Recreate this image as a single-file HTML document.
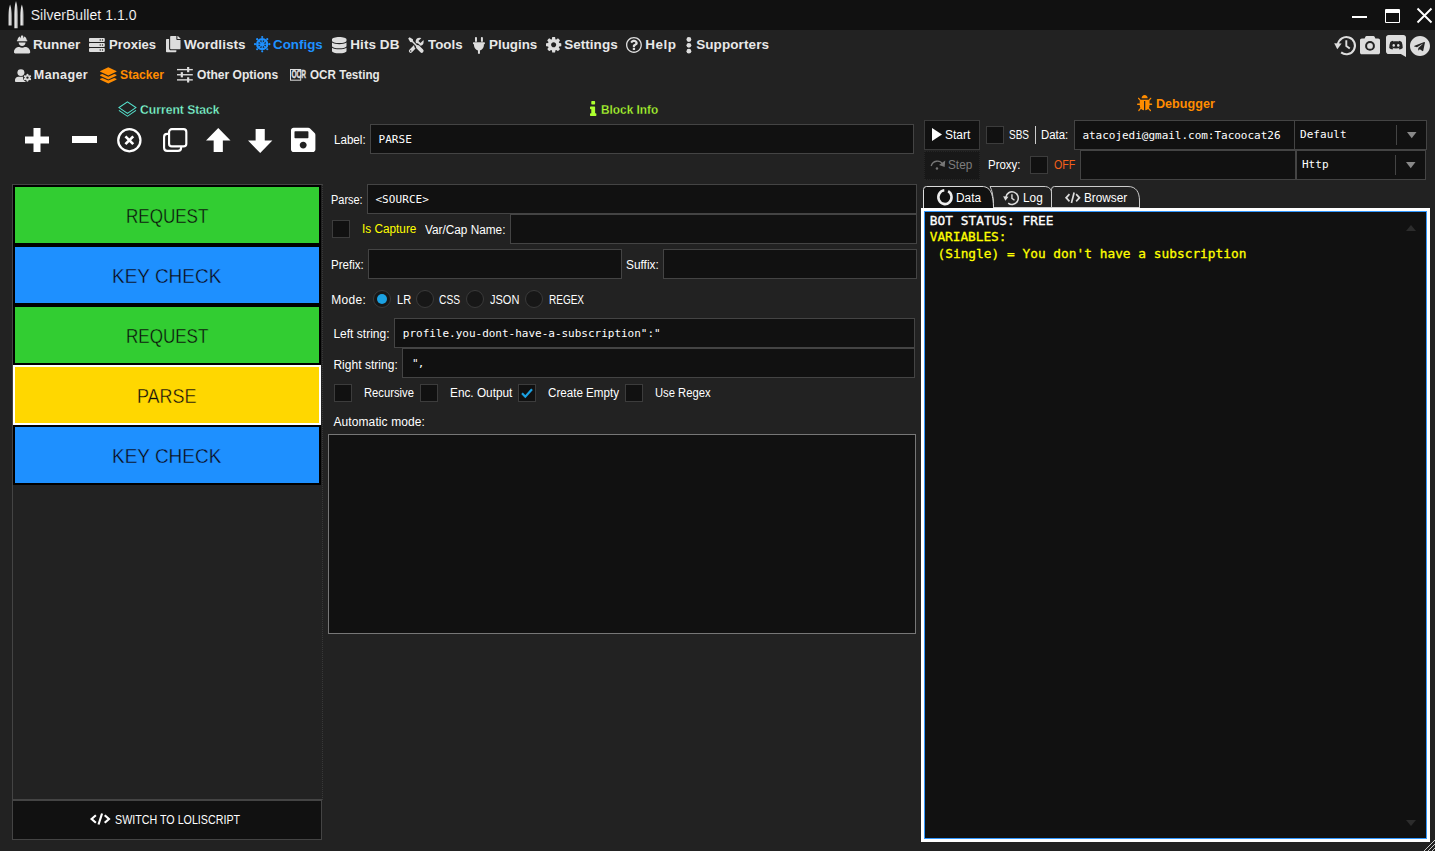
<!DOCTYPE html>
<html lang="en">
<head>
<meta charset="utf-8">
<title>SilverBullet 1.1.0</title>
<style>
html,body{margin:0;padding:0}
body{width:1435px;height:851px;overflow:hidden;background:#222;position:relative;color:#fff;font-family:"Liberation Sans",Arial,sans-serif}
.t{position:absolute;white-space:pre;line-height:20px;height:20px;display:block;transform-origin:0 50%}
.s{font-family:"Liberation Sans",Arial,sans-serif}
.m{font-family:"DejaVu Sans Mono","Liberation Mono",monospace}
.ic{position:absolute;display:block;overflow:visible}
div{position:absolute;box-sizing:border-box}
.titlebar{left:0;top:0;width:1435px;height:30px;background:#111}
.inp{background:#111;border:1px solid #444}
.chk{background:#111;border:1px solid #3c3c3c}
.btn{background:#111;border:1px solid #3a3a3a}
.blk{border:2px solid #000}
.rad{background:#171717;border:1px solid #3a3a3a;border-radius:50%}
.k32c{-webkit-text-stroke:.38px #32cd32}
.k1e9{-webkit-text-stroke:.38px #1e90ff}
.kffd{-webkit-text-stroke:.38px #ffd700}
.o{-webkit-text-stroke:.3px}
.tt{-webkit-text-stroke:.15px #111}
.th{-webkit-text-stroke:.3px #222}

</style>
</head>
<body>
<div class="titlebar">
<svg class="ic" style="left:7.5px;top:0.5px" width="16.0" height="27.5" viewBox="0 0 16 27.5" preserveAspectRatio="none"><defs><linearGradient id="bg" x1="0" x2="1" y1="0" y2="0"><stop offset="0" stop-color="#8a8a8a"/><stop offset=".45" stop-color="#f6f6f6"/><stop offset="1" stop-color="#7c7c7c"/></linearGradient></defs><path fill="url(#bg)" d="M2.100 3.500 C3.200 6.500 3.900 10.500 3.900 15 V24.500 H0.300 V15 C0.300 10.500 1 6.500 2.100 3.500 Z"/><path fill="url(#bg)" d="M8 0 C9.200 3.500 9.900 8.500 9.900 14 V27.200 H6.100 V14 C6.100 8.500 6.800 3.500 8 0 Z"/><path fill="url(#bg)" d="M13.900 3.500 C15 6.500 15.700 10.500 15.700 15 V24.500 H12.100 V15 C12.100 10.500 12.800 6.500 13.900 3.500 Z"/></svg>
<span class="t s tt" style="left:30.71px;top:5px;font-size:14px;letter-spacing:0.04px;">SilverBullet 1.1.0</span>
<div style="left:1352px;top:15.500px;width:15px;height:2px;background:#fff"></div>
<div style="left:1385px;top:9px;width:15px;height:14px;border:1.5px solid #fff;border-top-width:4.5px;border-radius:1px"></div>
<svg class="ic" style="left:1417.0px;top:8.0px" width="15.0" height="15.0" viewBox="0 0 15 15" preserveAspectRatio="none"><path d="M0.500 0.500 L14.500 14.500 M14.500 0.500 L0.500 14.500" stroke="#fff" stroke-width="1.900" fill="none"/></svg>
</div>
<nav class="mainmenu">
<svg class="ic" style="left:13.9px;top:34.9px" width="16.2" height="18.4" viewBox="0 0 448 512" preserveAspectRatio="none"><g fill="#ddd"><path d="M88 176h272c4.4 0 8-3.6 8-8v-16c0-4.4-3.600-8-8-8h-8c0-46.400-28.500-85.500-68.600-102.300L256 96V32c0-8.800-7.200-16-16-16h-32c-8.800 0-16 7.200-16 16v64l-27.400-54.300C124.500 58.500 96 97.600 96 144h-8c-4.400 0-8 3.600-8 8v16c0 4.400 3.600 8 8 8z"/><path d="M128 208c0 53 43 96 96 96s96-43 96-96z"/><path d="M313.600 336h-16.700c-22.200 10.200-46.900 16-72.900 16s-50.600-5.800-72.900-16h-16.700C60.200 336 0 396.200 0 470.400V480c0 17.700 14.300 32 32 32h384c17.700 0 32-14.300 32-32v-9.600c0-74.200-60.200-134.400-134.400-134.400z"/></g></svg>
<span class="t s" style="left:32.93px;top:35px;font-size:13.5px;font-weight:700;color:#e8e8e8;">Runner</span>
<svg class="ic" style="left:89.0px;top:37.9px" width="15.8" height="13.9" viewBox="0 0 18 15.100" preserveAspectRatio="none"><rect x="0" y="0.0" width="18" height="4.300" rx="1" fill="#ddd"/><circle cx="12.800" cy="2.15" r="0.800" fill="#222"/><circle cx="15.400" cy="2.15" r="0.800" fill="#222"/><rect x="0" y="5.4" width="18" height="4.300" rx="1" fill="#ddd"/><circle cx="12.800" cy="7.55" r="0.800" fill="#222"/><circle cx="15.400" cy="7.55" r="0.800" fill="#222"/><rect x="0" y="10.8" width="18" height="4.300" rx="1" fill="#ddd"/><circle cx="12.800" cy="12.95" r="0.800" fill="#222"/><circle cx="15.400" cy="12.95" r="0.800" fill="#222"/></svg>
<span class="t s" style="left:109.33px;top:35px;font-size:13.5px;font-weight:700;color:#e8e8e8;transform:scaleX(0.966);">Proxies</span>
<svg class="ic" style="left:165.9px;top:36.3px" width="14.5" height="16.3" viewBox="0 0 448 512" preserveAspectRatio="none"><path fill="#ddd" d="M320 448v40c0 13.255-10.745 24-24 24H24c-13.255 0-24-10.745-24-24V120c0-13.255 10.745-24 24-24h72v296c0 30.879 25.121 56 56 56h168zm0-344V0H152c-13.255 0-24 10.745-24 24v368c0 13.255 10.745 24 24 24h272c13.255 0 24-10.745 24-24V128H344c-13.2 0-24-10.8-24-24zm120.971-31.029L375.029 7.029A24 24 0 0 0 358.059 0H352v96h96v-6.059a24 24 0 0 0-7.029-16.97z"/></svg>
<span class="t s" style="left:183.93px;top:35px;font-size:13.5px;font-weight:700;color:#e8e8e8;letter-spacing:0.05px;">Wordlists</span>
<svg class="ic" style="left:253.7px;top:36.4px" width="16.4" height="16.4" viewBox="0 0 24 24" preserveAspectRatio="none"><circle cx="12" cy="12" r="7.300" fill="none" stroke="#1e90ff" stroke-width="3.400"/><circle cx="12" cy="12" r="2.900" fill="#1e90ff"/><line x1="14.00" y1="12.00" x2="19.00" y2="12.00" stroke="#1e90ff" stroke-width="1.900"/><circle cx="22.50" cy="12.00" r="1.600" fill="#1e90ff"/><line x1="13.41" y1="13.41" x2="16.95" y2="16.95" stroke="#1e90ff" stroke-width="1.900"/><circle cx="19.42" cy="19.42" r="1.600" fill="#1e90ff"/><line x1="12.00" y1="14.00" x2="12.00" y2="19.00" stroke="#1e90ff" stroke-width="1.900"/><circle cx="12.00" cy="22.50" r="1.600" fill="#1e90ff"/><line x1="10.59" y1="13.41" x2="7.05" y2="16.95" stroke="#1e90ff" stroke-width="1.900"/><circle cx="4.58" cy="19.42" r="1.600" fill="#1e90ff"/><line x1="10.00" y1="12.00" x2="5.00" y2="12.00" stroke="#1e90ff" stroke-width="1.900"/><circle cx="1.50" cy="12.00" r="1.600" fill="#1e90ff"/><line x1="10.59" y1="10.59" x2="7.05" y2="7.05" stroke="#1e90ff" stroke-width="1.900"/><circle cx="4.58" cy="4.58" r="1.600" fill="#1e90ff"/><line x1="12.00" y1="10.00" x2="12.00" y2="5.00" stroke="#1e90ff" stroke-width="1.900"/><circle cx="12.00" cy="1.50" r="1.600" fill="#1e90ff"/><line x1="13.41" y1="10.59" x2="16.95" y2="7.05" stroke="#1e90ff" stroke-width="1.900"/><circle cx="19.42" cy="4.58" r="1.600" fill="#1e90ff"/></svg>
<span class="t s" style="left:272.73px;top:35px;font-size:13.5px;font-weight:700;color:#1e90ff;transform:scaleX(0.990);">Configs</span>
<svg class="ic" style="left:332.0px;top:36.9px" width="14.5" height="16.3" viewBox="0 0 448 512" preserveAspectRatio="none"><path fill="#ddd" d="M448 73.143v45.714C448 159.143 347.667 192 224 192S0 159.143 0 118.857V73.143C0 32.857 100.333 0 224 0s224 32.857 224 73.143zM448 176v102.857C448 319.143 347.667 352 224 352S0 319.143 0 278.857V176c48.125 33.143 136.208 48.572 224 48.572S399.874 209.143 448 176zm0 160v102.857C448 479.143 347.667 512 224 512S0 479.143 0 438.857V336c48.125 33.143 136.208 48.572 224 48.572S399.874 369.143 448 336z"/></svg>
<span class="t s" style="left:350.23px;top:35px;font-size:13.5px;font-weight:700;color:#e8e8e8;letter-spacing:0.08px;">Hits DB</span>
<svg class="ic" style="left:408.0px;top:36.6px" width="16.4" height="16.7" viewBox="0 0 24.500 24.500" preserveAspectRatio="none"><line x1="4" y1="20.500" x2="14.500" y2="10" stroke="#ddd" stroke-width="5.400" stroke-linecap="round"/><circle cx="17.400" cy="7.100" r="6" fill="#ddd"/><rect x="17" y="4.900" width="9" height="4.400" transform="rotate(-45 17.400 7.100)" fill="#222"/><circle cx="4" cy="20.500" r="1.100" fill="#222"/><line x1="13.600" y1="13.600" x2="20.600" y2="20.600" stroke="#222" stroke-width="8" stroke-linecap="round"/><line x1="6" y1="6" x2="12.500" y2="12.500" stroke="#222" stroke-width="4.600"/><line x1="14.600" y1="14.600" x2="20.500" y2="20.500" stroke="#ddd" stroke-width="5.600" stroke-linecap="round"/><line x1="4.500" y1="4.500" x2="14" y2="14" stroke="#ddd" stroke-width="2.300"/><path d="M0.300 2.300 L2.300 0.300 L7.300 3.300 L7.600 5.400 L5.400 7.600 L3.300 7.300 Z" fill="#ddd"/></svg>
<span class="t s" style="left:428.13px;top:35px;font-size:13.5px;font-weight:700;color:#e8e8e8;transform:scaleX(0.987);">Tools</span>
<svg class="ic" style="left:472.8px;top:36.6px" width="11.9" height="16.7" viewBox="0 0 384 512" preserveAspectRatio="none"><path fill="#ddd" d="M256 144V32c0-17.673 14.327-32 32-32s32 14.327 32 32v112h-64zm112 16H16c-8.837 0-16 7.163-16 16v32c0 8.837 7.163 16 16 16h16v32c0 77.406 54.969 141.971 128 156.796V512h64v-99.204c73.031-14.825 128-79.390 128-156.796v-32h16c8.837 0 16-7.163 16-16v-32c0-8.837-7.163-16-16-16zm-240-16V32c0-17.673-14.327-32-32-32S64 14.327 64 32v112h64z"/></svg>
<span class="t s" style="left:489.03px;top:35px;font-size:13.5px;font-weight:700;color:#e8e8e8;transform:scaleX(0.991);">Plugins</span>
<svg class="ic" style="left:545.7px;top:37.2px" width="15.3" height="15.5" viewBox="0 0 1536 1536" preserveAspectRatio="none"><path fill="#ddd" d="M1024 768C1024 909 909 1024 768 1024C627 1024 512 909 512 768C512 627 627 512 768 512C909 512 1024 627 1024 768ZM1536 659C1536 642 1524 626 1507 623L1324 595C1314 562 1300 529 1283 497C1317 450 1354 406 1388 360C1393 353 1396 346 1396 337C1396 329 1394 321 1389 315C1347 256 1277 194 1224 145C1217 139 1208 135 1199 135C1190 135 1181 138 1175 144L1033 251C1004 236 974 224 943 214L915 30C913 13 897 0 879 0H657C639 0 625 12 621 28C605 88 599 153 592 214C561 224 530 237 501 252L363 145C355 139 346 135 337 135C303 135 168 281 144 314C139 321 135 328 135 337C135 346 139 354 145 361C182 406 218 451 252 499C236 529 223 559 213 591L27 619C12 622 0 640 0 655V877C0 894 12 910 29 913L212 940C222 974 236 1007 253 1039C219 1086 182 1130 148 1176C143 1183 140 1190 140 1199C140 1207 142 1215 147 1222C189 1280 259 1342 312 1390C319 1397 328 1401 337 1401C346 1401 355 1398 362 1392L503 1285C532 1300 562 1312 593 1322L621 1506C623 1523 639 1536 657 1536H879C897 1536 911 1524 915 1508C931 1448 937 1383 944 1322C975 1312 1006 1299 1035 1284L1173 1392C1181 1397 1190 1401 1199 1401C1233 1401 1368 1254 1392 1222C1398 1215 1401 1208 1401 1199C1401 1190 1397 1181 1391 1174C1354 1129 1318 1085 1284 1036C1300 1007 1312 977 1323 945L1508 917C1524 914 1536 896 1536 881Z"/></svg>
<span class="t s" style="left:564.23px;top:35px;font-size:13.5px;font-weight:700;color:#e8e8e8;letter-spacing:0.03px;">Settings</span>
<svg class="ic" style="left:625.9px;top:36.8px" width="15.9" height="15.9" viewBox="0 0 1536 1536" preserveAspectRatio="none"><path fill="#ddd" d="M880 1072C880 1054 866 1040 848 1040H688C670 1040 656 1054 656 1072V1232C656 1250 670 1264 688 1264H848C866 1264 880 1250 880 1232ZM1136 576C1136 402 952 272 788 272C636 272 521 335 439 464C430 478 433 497 446 507L554 589C559 593 566 595 573 595C583 595 592 591 598 583C635 537 656 515 678 500C701 484 738 473 773 473C839 473 912 516 912 574C912 619 875 638 815 666C744 698 656 737 656 860V928C656 946 670 960 688 960H848C866 960 880 946 880 928V896C880 864 912 845 964 815C1037 774 1136 718 1136 576ZM768 128C1121 128 1408 415 1408 768C1408 1121 1121 1408 768 1408C415 1408 128 1121 128 768C128 415 415 128 768 128ZM1536 768C1536 344 1192 0 768 0C344 0 0 344 0 768C0 1192 344 1536 768 1536C1192 1536 1536 1192 1536 768Z"/></svg>
<span class="t s" style="left:645.33px;top:35px;font-size:13.5px;font-weight:700;color:#e8e8e8;letter-spacing:0.43px;">Help</span>
<svg class="ic" style="left:686.0px;top:36.6px" width="5.8" height="16.7" viewBox="0 0 6 17" preserveAspectRatio="none"><circle cx="3" cy="2.600" r="2.500" fill="#ddd"/><circle cx="3" cy="8.500" r="2.500" fill="#ddd"/><circle cx="3" cy="14.400" r="2.500" fill="#ddd"/></svg>
<span class="t s" style="left:696.13px;top:35px;font-size:13.5px;font-weight:700;color:#e8e8e8;letter-spacing:0.1px;">Supporters</span>
<svg class="ic" style="left:1334.0px;top:35.5px" width="22.0" height="19.3" viewBox="0 0 22 19.300" preserveAspectRatio="none"><path d="M3.93 8.46 A 8.55 8.55 0 1 1 7.14 16.39" fill="none" stroke="#ddd" stroke-width="2.100"/><path d="M0.200 7.200 L7.600 7.600 L3.300 13.300 Z" fill="#ddd"/><path d="M12.300 4.300 V9.900 L15.800 12.500" fill="none" stroke="#ddd" stroke-width="1.900"/></svg>
<svg class="ic" style="left:1360.0px;top:36.0px" width="20.0" height="18.2" viewBox="0 0 20 18.200" preserveAspectRatio="none"><path fill="#ddd" d="M1.800 2.400 H4.600 L5.300 0.900 C5.500 0.300 6 0 6.600 0 H13.400 C14 0 14.500 0.300 14.700 0.900 L15.400 2.400 H18.200 C19.200 2.400 20 3.200 20 4.200 V16.400 C20 17.400 19.200 18.200 18.200 18.200 H1.800 C0.800 18.200 0 17.400 0 16.400 V4.200 C0 3.200 0.800 2.400 1.800 2.400 Z"/><circle cx="10" cy="9.900" r="4.900" fill="#222"/><circle cx="10" cy="9.900" r="2.900" fill="#ddd"/></svg>
<svg class="ic" style="left:1386.0px;top:35.0px" width="20.0" height="22.0" viewBox="0 0 20 22" preserveAspectRatio="none"><path fill="#ddd" d="M2.600 0 H17.400 C18.800 0 20 1.200 20 2.600 V22 L14.800 19 H2.600 C1.200 19 0 17.800 0 16.400 V2.600 C0 1.200 1.200 0 2.600 0 Z"/><g transform="translate(0.500 0.600) scale(0.950 1)"><path fill="#222" d="M6.900 5.200 C5.600 5.500 4.600 6 4 6.500 C3.300 8.300 2.900 10.300 2.900 12.400 C3.800 13.300 5.200 13.800 6.300 13.900 L7.100 12.900 C6.400 12.700 5.800 12.400 5.300 12 C8 13.300 12 13.300 14.700 12 C14.200 12.400 13.600 12.700 12.900 12.900 L13.700 13.900 C14.800 13.800 16.200 13.300 17.100 12.400 C17.100 10.300 16.700 8.300 16 6.500 C15.400 6 14.400 5.500 13.100 5.200 L12.800 5.800 C11 5.500 9 5.500 7.200 5.800 Z"/><ellipse cx="7.600" cy="9.800" rx="1.300" ry="1.400" fill="#ddd"/><ellipse cx="12.400" cy="9.800" rx="1.300" ry="1.400" fill="#ddd"/></g></svg>
<svg class="ic" style="left:1410.2px;top:36.0px" width="20.0" height="20.0" viewBox="0 0 1792 1792" preserveAspectRatio="none"><path fill="#ddd" d="M1189 1307C1178 1356 1149 1368 1108 1345L884 1180L776 1284C764 1296 754 1306 731 1306L747 1078L1162 703C1180 687 1158 678 1134 694L621 1017L400 948C352 933 351 900 410 877L1274 544C1314 529 1349 553 1336 614ZM1792 896C1792 401 1391 0 896 0C401 0 0 401 0 896C0 1391 401 1792 896 1792C1391 1792 1792 1391 1792 896Z"/></svg>
</nav>
<nav class="submenu">
<svg class="ic" style="left:14.7px;top:68.6px" width="16.2" height="13.4" viewBox="0 0 23 19.500" preserveAspectRatio="none"><circle cx="8.400" cy="5.200" r="5" fill="#ddd"/><path fill="#ddd" d="M4.600 11.400 H12.400 C15 11.400 16.800 13.400 16.800 16 V17.400 C16.800 18.300 16.100 19 15.200 19 H1.600 C0.700 19 0 18.300 0 17.400 V16 C0 13.400 2.100 11.400 4.600 11.400 Z"/><circle cx="17.7" cy="12.6" r="6.300" fill="#222"/><circle cx="17.7" cy="12.6" r="3.900" fill="#ddd"/><circle cx="21.42" cy="14.75" r="1.500" fill="#ddd"/><circle cx="17.70" cy="16.90" r="1.500" fill="#ddd"/><circle cx="13.98" cy="14.75" r="1.500" fill="#ddd"/><circle cx="13.98" cy="10.45" r="1.500" fill="#ddd"/><circle cx="17.70" cy="8.30" r="1.500" fill="#ddd"/><circle cx="21.42" cy="10.45" r="1.500" fill="#ddd"/><circle cx="17.7" cy="12.6" r="1.700" fill="#222"/></svg>
<span class="t s" style="left:33.86px;top:65px;font-size:12.5px;font-weight:700;color:#e8e8e8;letter-spacing:0.41px;">Manager</span>
<svg class="ic" style="left:100.0px;top:66.6px" width="16.6" height="16.5" viewBox="0 0 20 20" preserveAspectRatio="none"><g fill="#ff8c00"><path d="M10 0.300 L19.600 4.700 C20.100 4.900 20.100 5.700 19.600 5.900 L10 10.300 L0.400 5.900 C-0.100 5.700 -0.100 4.900 0.400 4.700 Z"/><path d="M19.600 9.500 L17.200 8.400 L10 11.700 L2.800 8.400 L0.400 9.500 C-0.100 9.700 -0.100 10.500 0.400 10.700 L10 15.100 L19.600 10.700 C20.100 10.500 20.100 9.700 19.600 9.500 Z"/><path d="M19.600 14.300 L17.200 13.200 L10 16.500 L2.800 13.200 L0.400 14.300 C-0.100 14.500 -0.100 15.300 0.400 15.500 L10 19.900 L19.600 15.500 C20.100 15.300 20.100 14.500 19.600 14.300 Z"/></g></svg>
<span class="t s" style="left:120.26px;top:65px;font-size:12.5px;font-weight:700;color:#ff8c00;transform:scaleX(0.975);">Stacker</span>
<svg class="ic" style="left:177.2px;top:67.0px" width="15.8" height="15.5" viewBox="0 0 16 16" preserveAspectRatio="none"><g fill="#ddd"><rect x="0" y="2" width="16" height="1.400"/><rect x="10.200" y="0" width="2.200" height="5.400"/><rect x="0" y="7.300" width="16" height="1.400"/><rect x="3.800" y="5.300" width="2.200" height="5.400"/><rect x="0" y="12.600" width="16" height="1.400"/><rect x="10.200" y="10.600" width="2.200" height="5.400"/></g></svg>
<span class="t s" style="left:197.06px;top:65px;font-size:12.5px;font-weight:700;color:#e8e8e8;transform:scaleX(0.965);">Other Options</span>
<svg class="ic" style="left:290.4px;top:69.0px" width="16.3" height="11.7" viewBox="0 0 16.300 11.700" preserveAspectRatio="none"><rect x="0.500" y="0.500" width="10.200" height="10.700" fill="none" stroke="#ddd" stroke-width="1"/><text x="1.400" y="9.500" font-family="Liberation Sans, Arial, sans-serif" font-weight="700" font-size="10" fill="#ddd" stroke="#ddd" stroke-width="0.450" textLength="14.600" lengthAdjust="spacingAndGlyphs">OCR</text></svg>
<span class="t s" style="left:310.46px;top:65px;font-size:12.5px;font-weight:700;color:#e8e8e8;transform:scaleX(0.932);">OCR Testing</span>
</nav>
<main>
<section class="stack">
<svg class="ic" style="left:118.2px;top:101.2px" width="18.9" height="16.1" viewBox="0 0 20 19.500" preserveAspectRatio="none"><path fill="none" stroke="#56e4cf" stroke-width="1.150" stroke-linejoin="miter" d="M10 1 L19 8 L10 15 L1 8 Z"/><path fill="none" stroke="#56e4cf" stroke-width="1.150" d="M1 11.500 L10 18.500 L19 11.500"/></svg>
<span class="t s th" style="left:140.04px;top:100px;font-size:13px;font-weight:700;color:#7fffd4;transform:scaleX(0.934);">Current Stack</span>
<svg class="ic" style="left:25.0px;top:128.0px" width="24.0" height="24.0" viewBox="0 0 24 24" preserveAspectRatio="none"><path fill="#fff" d="M8.500 0 H15.500 V8.500 H24 V15.500 H15.500 V24 H8.500 V15.500 H0 V8.500 H8.500 Z"/></svg>
<div style="left:72px;top:136.200px;width:25px;height:7px;background:#fff"></div>
<svg class="ic" style="left:117.3px;top:127.7px" width="24.7" height="24.5" viewBox="0 0 24 24" preserveAspectRatio="none"><circle cx="12" cy="12" r="10.800" fill="none" stroke="#fff" stroke-width="2.200"/><path d="M8.200 8.200 L15.800 15.800 M15.800 8.200 L8.200 15.800" stroke="#fff" stroke-width="2.600" fill="none"/></svg>
<svg class="ic" style="left:162.8px;top:128.0px" width="24.5" height="24.0" viewBox="0 0 25 24.500" preserveAspectRatio="none"><rect x="6.200" y="1.200" width="17.600" height="17.600" rx="2.800" fill="none" stroke="#fff" stroke-width="2.200"/><path d="M6.200 6 H4.300 C2.300 6 1.100 7.200 1.100 9.200 V20.200 C1.100 22.200 2.300 23.400 4.300 23.400 H15.300 C17.300 23.400 18.500 22.200 18.500 20.200 V18.800" fill="none" stroke="#fff" stroke-width="2.200"/></svg>
<svg class="ic" style="left:206.0px;top:128.0px" width="24.5" height="24.0" viewBox="0 0 24 23" preserveAspectRatio="none"><path fill="#fff" d="M12 0 L24 12 H16.500 V23 H7.500 V12 H0 Z"/></svg>
<svg class="ic" style="left:248.3px;top:129.0px" width="24.4" height="24.0" viewBox="0 0 24 23" preserveAspectRatio="none"><path fill="#fff" d="M12 23 L24 11 H16.500 V0 H7.500 V11 H0 Z"/></svg>
<svg class="ic" style="left:290.6px;top:126.0px" width="24.4" height="27.8" viewBox="0 0 448 512" preserveAspectRatio="none"><path fill="#fff" d="M433.941 129.941l-83.882-83.882A48 48 0 0 0 316.118 32H48C21.49 32 0 53.49 0 80v352c0 26.51 21.49 48 48 48h352c26.51 0 48-21.49 48-48V163.882a48 48 0 0 0-14.059-33.941zM224 416c-35.346 0-64-28.654-64-64 0-35.346 28.654-64 64-64s64 28.654 64 64c0 35.346-28.654 64-64 64zm96-304.52V212c0 6.627-5.373 12-12 12H76c-6.627 0-12-5.373-12-12V108c0-6.627 5.373-12 12-12h228.52c3.183 0 6.235 1.264 8.485 3.515l3.48 3.48A11.996 11.996 0 0 1 320 111.48z"/></svg>
<div class="list" style="left:12px;top:184px;width:311px;height:616px;border:1px solid #444;border-right:1px dotted #383838"></div>
<div class="blk" style="left:13px;top:185px;width:308px;height:60px;background:#32cd32;"></div>
<span class="t s k32c" style="left:126.3px;top:206.3px;font-size:20px;color:#0c0c0c;transform:scaleX(0.852);">REQUEST</span>
<div class="blk" style="left:13px;top:245px;width:308px;height:60px;background:#1e90ff;"></div>
<span class="t s k1e9" style="left:112.3px;top:266.3px;font-size:20px;color:#0c0c0c;transform:scaleX(0.949);">KEY CHECK</span>
<div class="blk" style="left:13px;top:305px;width:308px;height:60px;background:#32cd32;"></div>
<span class="t s k32c" style="left:126.3px;top:326.3px;font-size:20px;color:#0c0c0c;transform:scaleX(0.852);">REQUEST</span>
<div class="blk" style="left:13px;top:365px;width:308px;height:60px;background:#ffd700;border-color:#fff;"></div>
<span class="t s kffd" style="left:137.3px;top:386.3px;font-size:20px;color:#0c0c0c;transform:scaleX(0.896);">PARSE</span>
<div class="blk" style="left:13px;top:425px;width:308px;height:60px;background:#1e90ff;"></div>
<span class="t s k1e9" style="left:112.3px;top:446.3px;font-size:20px;color:#0c0c0c;transform:scaleX(0.949);">KEY CHECK</span>
<div class="btn" style="left:12px;top:800px;width:310px;height:40px;border-color:#444"></div>
<svg class="ic" style="left:89.6px;top:813.2px" width="20.6" height="12.0" viewBox="0 0 21 13" preserveAspectRatio="none"><path d="M6 2.400 L1.600 6.500 L6 10.600 M15 2.400 L19.400 6.500 L15 10.600" fill="none" stroke="#fff" stroke-width="2.2"/><path d="M12.300 0.600 L8.700 12.400" fill="none" stroke="#fff" stroke-width="2.2"/></svg>
<span class="t s" style="left:114.58px;top:810.3px;font-size:12px;transform:scaleX(0.892);">SWITCH TO LOLISCRIPT</span>
</section>
<section class="blockinfo">
<svg class="ic" style="left:590.1px;top:101.0px" width="6.4" height="15.0" viewBox="0 0 640 1408" preserveAspectRatio="none"><path fill="#adff2f" d="M640 1216C640 1181 611 1152 576 1152H512V576C512 541 483 512 448 512H64C29 512 0 541 0 576V704C0 739 29 768 64 768H128V1152H64C29 1152 0 1181 0 1216V1344C0 1379 29 1408 64 1408H576C611 1408 640 1379 640 1344ZM512 64C512 29 483 0 448 0H192C157 0 128 29 128 64V256C128 291 157 320 192 320H448C483 320 512 291 512 256Z"/></svg>
<span class="t s th" style="left:601.34px;top:100px;font-size:13px;font-weight:700;color:#adff2f;transform:scaleX(0.912);">Block Info</span>
<span class="t s" style="left:334.08px;top:130px;font-size:12px;transform:scaleX(0.967);">Label:</span>
<div class="inp" style="left:370px;top:124px;width:544px;height:30px;"></div>
<span class="t m" style="left:378.62px;top:130px;font-size:11px;letter-spacing:0.01px;">PARSE</span>
<span class="t s" style="left:331.18px;top:190px;font-size:12px;transform:scaleX(0.912);">Parse:</span>
<div class="inp" style="left:367px;top:184px;width:550px;height:30px;"></div>
<span class="t m" style="left:375.42px;top:190px;font-size:11px;letter-spacing:0.08px;">&lt;SOURCE&gt;</span>
<div class="chk" style="left:332px;top:220px;width:18px;height:18px;"></div>
<span class="t s" style="left:361.98px;top:219px;font-size:12px;color:#ffff00;transform:scaleX(0.982);">Is Capture</span>
<span class="t s" style="left:425.48px;top:220px;font-size:12px;transform:scaleX(0.983);">Var/Cap Name:</span>
<div class="inp" style="left:510px;top:214px;width:407px;height:30px;"></div>
<span class="t s" style="left:331.18px;top:255px;font-size:12px;transform:scaleX(0.962);">Prefix:</span>
<div class="inp" style="left:368px;top:249px;width:254px;height:30px;"></div>
<span class="t s" style="left:626.18px;top:255px;font-size:12px;transform:scaleX(0.988);">Suffix:</span>
<div class="inp" style="left:663px;top:249px;width:254px;height:30px;"></div>
<span class="t s" style="left:331.18px;top:290px;font-size:12px;letter-spacing:0.3px;">Mode:</span>
<div class="rad" style="left:373px;top:290px;width:18px;height:18px"></div>
<div style="left:376.9px;top:293.900px;width:10.400px;height:10.400px;border-radius:50%;background:#1ba1e2"></div>
<span class="t s" style="left:396.58px;top:290px;font-size:12px;transform:scaleX(0.922);">LR</span>
<div class="rad" style="left:416px;top:290px;width:18px;height:18px"></div>
<span class="t s" style="left:439.38px;top:290px;font-size:12px;transform:scaleX(0.852);">CSS</span>
<div class="rad" style="left:466px;top:290px;width:18px;height:18px"></div>
<span class="t s" style="left:489.58px;top:290px;font-size:12px;transform:scaleX(0.916);">JSON</span>
<div class="rad" style="left:524.5px;top:290px;width:18px;height:18px"></div>
<span class="t s" style="left:548.58px;top:290px;font-size:12px;transform:scaleX(0.834);">REGEX</span>
<span class="t s" style="left:333.38px;top:324px;font-size:12px;letter-spacing:0.01px;">Left string:</span>
<div class="inp" style="left:394px;top:318px;width:521px;height:30px;"></div>
<span class="t m" style="left:402.81px;top:324px;font-size:11px;letter-spacing:-0.01px;">profile.you-dont-have-a-subscription":"</span>
<span class="t s" style="left:333.38px;top:354.5px;font-size:12px;letter-spacing:0.03px;">Right string:</span>
<div class="inp" style="left:402px;top:348px;width:513px;height:30px;"></div>
<span class="t m" style="left:412.12px;top:354px;font-size:11px;letter-spacing:-0.98px;">",</span>
<div class="chk" style="left:334px;top:384px;width:18px;height:18px;"></div>
<span class="t s" style="left:364.08px;top:383px;font-size:12px;transform:scaleX(0.936);">Recursive</span>
<div class="chk" style="left:420px;top:384px;width:18px;height:18px;"></div>
<span class="t s" style="left:449.78px;top:383px;font-size:12px;transform:scaleX(0.984);">Enc. Output</span>
<div class="chk" style="left:518px;top:384px;width:18px;height:18px;"></div>
<svg class="ic" style="left:521.0px;top:387.5px" width="12.0" height="10.5" viewBox="0 0 12 10.500" preserveAspectRatio="none"><path d="M1 5.200 L4.300 8.700 L11 1.200" fill="none" stroke="#1ba1e2" stroke-width="2.200"/></svg>
<span class="t s" style="left:547.88px;top:383px;font-size:12px;transform:scaleX(0.968);">Create Empty</span>
<div class="chk" style="left:625px;top:384px;width:18px;height:18px;"></div>
<span class="t s" style="left:654.68px;top:383px;font-size:12px;transform:scaleX(0.935);">Use Regex</span>
<span class="t s" style="left:333.38px;top:412px;font-size:12px;letter-spacing:0.11px;">Automatic mode:</span>
<div class="inp" style="left:328px;top:434px;width:588px;height:200px;border-color:#777"></div>
</section>
<section class="debugger">
<svg class="ic" style="left:1137.4px;top:94.9px" width="15.3" height="16.2" viewBox="0 0 1600 1568" preserveAspectRatio="none"><path fill="#ff8c00" d="M1600 896C1600 861 1571 832 1536 832H1312C1312 704 1312 604 1312 538L1485 365C1510 340 1510 300 1485 275C1460 250 1420 250 1395 275L1222 448H378L205 275C180 250 140 250 115 275C90 300 90 340 115 365L288 538C288 604 288 704 288 832H64C29 832 0 861 0 896C0 931 29 960 64 960H288C288 1076 311 1165 346 1234L144 1461C121 1488 123 1528 149 1552C162 1563 177 1568 192 1568C210 1568 227 1561 240 1547L423 1340C423 1340 555 1472 736 1472V576H864V1472C1034 1472 1165 1352 1165 1352L1363 1549C1375 1562 1392 1568 1408 1568C1424 1568 1441 1562 1453 1549C1478 1524 1478 1484 1453 1459L1245 1250C1285 1179 1312 1085 1312 960H1536C1571 960 1600 931 1600 896ZM1120 320C1120 143 977 0 800 0C623 0 480 143 480 320H1120Z"/></svg>
<span class="t s" style="left:1156.14px;top:94px;font-size:13px;font-weight:700;color:#ff8c00;transform:scaleX(0.969);">Debugger</span>
<div class="btn" style="left:924px;top:120px;width:56px;height:30px;"></div>
<svg class="ic" style="left:932.0px;top:128.0px" width="10.0" height="13.0" viewBox="0 0 10 13" preserveAspectRatio="none"><path fill="#fff" d="M0 0 L10 6.500 L0 13 Z"/></svg>
<span class="t s" style="left:944.78px;top:125.3px;font-size:12px;transform:scaleX(0.996);">Start</span>
<div class="chk" style="left:986px;top:126px;width:18px;height:18px;"></div>
<span class="t s" style="left:1009.18px;top:125px;font-size:12px;transform:scaleX(0.834);">SBS</span>
<div style="left:1035px;top:126px;width:1px;height:18px;background:#ccc"></div>
<span class="t s" style="left:1041.38px;top:125.3px;font-size:12px;transform:scaleX(0.950);">Data:</span>
<div class="inp" style="left:1074px;top:120px;width:221px;height:30px;"></div>
<span class="t m" style="left:1082.41px;top:126px;font-size:11px;letter-spacing:-0.02px;">atacojedi@gmail.com:Tacoocat26</span>
<div class="inp" style="left:1294px;top:120px;width:133px;height:30px;"></div>
<span class="t m" style="left:1300.02px;top:125px;font-size:11px;letter-spacing:0.04px;">Default</span>
<div style="left:1396px;top:125px;width:1px;height:20px;background:#444"></div>
<svg class="ic" style="left:1407.0px;top:131.6px" width="9.5" height="6.2" viewBox="0 0 10 6" preserveAspectRatio="none"><path fill="#888" d="M0 0 H10 L5 6 Z"/></svg>
<div class="btn" style="left:924px;top:150.5px;width:56px;height:29.0px;background:#181818;border:1px dotted #262626"></div>
<svg class="ic" style="left:929.6px;top:158.0px" width="15.6" height="12.5" viewBox="0 0 17 13.500" preserveAspectRatio="none"><path fill="none" stroke="#777" stroke-width="1.500" d="M1.300 8.600 C3 2.800 10.500 1.600 13.600 6.400"/><path fill="#777" d="M16.600 2.600 L16 9.600 L9.800 7.500 Z"/><circle cx="7.600" cy="11.300" r="1.350" fill="#777"/></svg>
<span class="t s" style="left:947.78px;top:155.3px;font-size:12px;color:#7d7d7d;transform:scaleX(0.982);">Step</span>
<span class="t s" style="left:988.38px;top:155.3px;font-size:12px;transform:scaleX(0.954);">Proxy:</span>
<div class="chk" style="left:1030px;top:156px;width:18px;height:18px;"></div>
<span class="t s" style="left:1054.08px;top:155.3px;font-size:12px;color:#f4601a;transform:scaleX(0.889);">OFF</span>
<div class="inp" style="left:1080px;top:150px;width:216px;height:30px;"></div>
<div class="inp" style="left:1296px;top:150px;width:130px;height:30px;"></div>
<span class="t m" style="left:1301.91px;top:155px;font-size:11px;letter-spacing:0.09px;">Http</span>
<div style="left:1395px;top:155px;width:1px;height:20px;background:#444"></div>
<svg class="ic" style="left:1406.0px;top:161.8px" width="9.5" height="6.2" viewBox="0 0 10 6" preserveAspectRatio="none"><path fill="#888" d="M0 0 H10 L5 6 Z"/></svg>
<svg class="ic" style="left:920.0px;top:184.0px" width="225.0" height="26.0" viewBox="0 0 225 26" preserveAspectRatio="none"><path d="M131.500 24 V5.500 Q131.500 2.500 134.500 2.500 H208 C216 2.500 219.500 8 219.500 17 V24" fill="#222" stroke="#ccc" stroke-width="1"/><path d="M73.500 24 C73.500 12 72 6 70 2.500 H124 C129 2.500 131.500 5 131.500 9" fill="#222" stroke="#ccc" stroke-width="1"/><path d="M73.500 23.500 H219.500" stroke="#ccc" stroke-width="1" fill="none"/><path d="M3.500 25 V5.500 Q3.500 2.500 6.500 2.500 H62 C70 2.500 73.500 9 73.500 25 Z" fill="#111" stroke="#ddd" stroke-width="1"/></svg>
<svg class="ic" style="left:935.6px;top:189.2px" width="17.0" height="16.4" viewBox="0 0 16.400 15" preserveAspectRatio="none"><path d="M11.700 1.900 A 6.350 6.350 0 1 1 8 1.150" fill="none" stroke="#eee" stroke-width="2.500"/></svg>
<span class="t s" style="left:956.18px;top:188.3px;font-size:12px;transform:scaleX(0.987);">Data</span>
<svg class="ic" style="left:1002.8px;top:190.5px" width="16.0" height="14.3" viewBox="0 0 22 19.300" preserveAspectRatio="none"><path d="M3.93 8.46 A 8.55 8.55 0 1 1 7.14 16.39" fill="none" stroke="#ddd" stroke-width="2.100"/><path d="M0.200 7.200 L7.600 7.600 L3.300 13.300 Z" fill="#ddd"/><path d="M12.300 4.300 V9.900 L15.800 12.500" fill="none" stroke="#ddd" stroke-width="1.900"/></svg>
<span class="t s" style="left:1022.88px;top:188.3px;font-size:12px;transform:scaleX(0.985);">Log</span>
<svg class="ic" style="left:1064.9px;top:192.3px" width="15.6" height="11.5" viewBox="0 0 21 13" preserveAspectRatio="none"><path d="M6 2.400 L1.600 6.500 L6 10.600 M15 2.400 L19.400 6.500 L15 10.600" fill="none" stroke="#ddd" stroke-width="2.3"/><path d="M12.300 0.600 L8.700 12.400" fill="none" stroke="#ddd" stroke-width="2.3"/></svg>
<span class="t s" style="left:1084.38px;top:188.3px;font-size:12px;transform:scaleX(0.980);">Browser</span>

<div class="outp" style="left:921px;top:208px;width:509px;height:634px;background:#111;border:3px solid #fff;box-shadow:inset 0 0 0 1px #3399ff"></div>
<span class="t m o" style="left:929.75px;top:210.8px;font-size:12.8px;letter-spacing:0.03px;">BOT STATUS: FREE</span>
<span class="t m o" style="left:929.75px;top:227.21px;font-size:12.8px;color:#ffff00;letter-spacing:-0.04px;">VARIABLES:</span>
<span class="t m o" style="left:929.75px;top:243.61px;font-size:12.8px;color:#ffff00;letter-spacing:0.02px;"> (Single) = You don't have a subscription</span>
<svg class="ic" style="left:1406.0px;top:224.5px" width="10.0" height="6.0" viewBox="0 0 12 7" preserveAspectRatio="none"><path fill="#2c2c2c" d="M0 7 H12 L6 0 Z"/></svg>
<svg class="ic" style="left:1406.0px;top:820.0px" width="10.0" height="6.0" viewBox="0 0 12 7" preserveAspectRatio="none"><path fill="#2c2c2c" d="M0 0 H12 L6 7 Z"/></svg>
<svg class="ic" style="left:1423.0px;top:839.0px" width="12.0" height="12.0" viewBox="0 0 12 12" preserveAspectRatio="none"><path d="M12 1 L1 12 M12 5 L5 12 M12 9 L9 12" stroke="#ccc" stroke-width="1" fill="none"/></svg>
</section>
</main>
</body>
</html>
